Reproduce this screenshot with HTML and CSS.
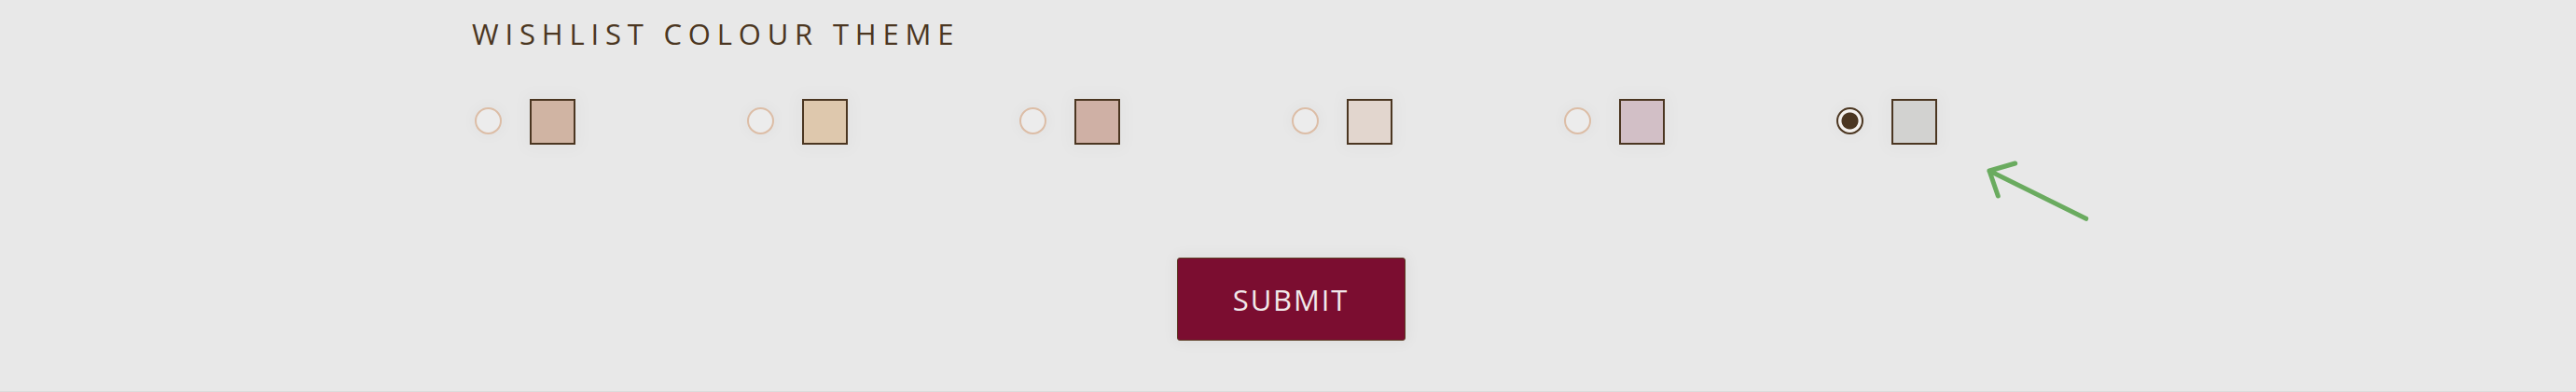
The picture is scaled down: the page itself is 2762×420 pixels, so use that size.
FILE: index.html
```html
<!DOCTYPE html>
<html lang="en">
<head>
<meta charset="utf-8">
<title>Wishlist colour theme</title>
<link rel="stylesheet" href="styles.css">
</head>
<body>
<div class="page">
  <section class="theme">
    <h2 class="title">WISHLIST COLOUR THEME</h2>
    <div class="options">
      <label class="option"><span class="radio"></span><span class="swatch swatch-1"></span></label>
      <label class="option"><span class="radio"></span><span class="swatch swatch-2"></span></label>
      <label class="option"><span class="radio"></span><span class="swatch swatch-3"></span></label>
      <label class="option"><span class="radio"></span><span class="swatch swatch-4"></span></label>
      <label class="option"><span class="radio"></span><span class="swatch swatch-5"></span></label>
      <label class="option"><span class="radio radio-checked"></span><span class="swatch swatch-6"></span></label>
    </div>
    <div class="actions"><button class="submit" type="button">SUBMIT</button></div>
  </section>
  <svg class="arrow" width="130" height="80" viewBox="0 0 130 80">
    <path d="M116.7 69.3 L13 18 M40.7 10 L13 18 L22.3 45" fill="none" stroke="#6aab5f" stroke-width="5" stroke-linecap="round" stroke-linejoin="round"/>
  </svg>
</div>
</body>
</html>
```
FILE: styles.css
```css
html, body {
  margin: 0;
  padding: 0;
  background: #e8e8e8;
}
body {
  font-family: "Open Sans", "Liberation Sans", sans-serif;
}
.page {
  position: relative;
  height: 419px;
  border-bottom: 1px solid #dcdcdc;
}
.theme {
  width: 1752px;
  margin: 0 auto;
  padding-top: 16px;
}
.title {
  margin: 0;
  padding-left: 1px;
  font-size: 31px;
  line-height: 40px;
  font-weight: 400;
  letter-spacing: 0.22em;
  color: #4b3621;
}
.options {
  display: grid;
  grid-template-columns: repeat(6, 292px);
  margin-top: 50px;
}
.option {
  display: flex;
  align-items: center;
  gap: 30px;
  padding-left: 4px;
}
.radio {
  box-sizing: border-box;
  width: 29px;
  height: 29px;
  margin-top: -3px;
  border: 2px solid #dcbda6;
  border-radius: 50%;
  background: #ececec;
  box-shadow: 0 0 14px 4px rgba(0, 0, 0, 0.025);
}
.radio-checked {
  border-color: #4b3621;
  background: radial-gradient(circle, #4b3621 0 8.5px, #f4f1ee 9.5px);
}
.swatch {
  box-sizing: border-box;
  width: 49px;
  height: 49px;
  border: 2px solid #4b3621;
  box-shadow: 0 0 16px 6px rgba(0, 0, 0, 0.025);
}
.swatch-1 { background: #d0b4a3; }
.swatch-2 { background: #dec8ad; }
.swatch-3 { background: #cfb0a5; }
.swatch-4 { background: #e2d6ce; }
.swatch-5 { background: #d2bfc6; }
.swatch-6 { background: #d2d2d0; }
.actions {
  display: flex;
  justify-content: center;
  padding-left: 6px;
  margin-top: 121px;
}
.submit {
  box-sizing: border-box;
  width: 245px;
  height: 89px;
  background: #7b0d30;
  border: 1px solid #5b3b22;
  border-radius: 3px;
  color: #f1e8ea;
  font-family: "Open Sans", "Liberation Sans", sans-serif;
  font-size: 31px;
  letter-spacing: 0.06em;
  box-shadow: 0 0 14px 4px rgba(0, 0, 0, 0.04);
  padding: 0;
}
.arrow {
  position: absolute;
  left: 2120px;
  top: 165px;
}
```
